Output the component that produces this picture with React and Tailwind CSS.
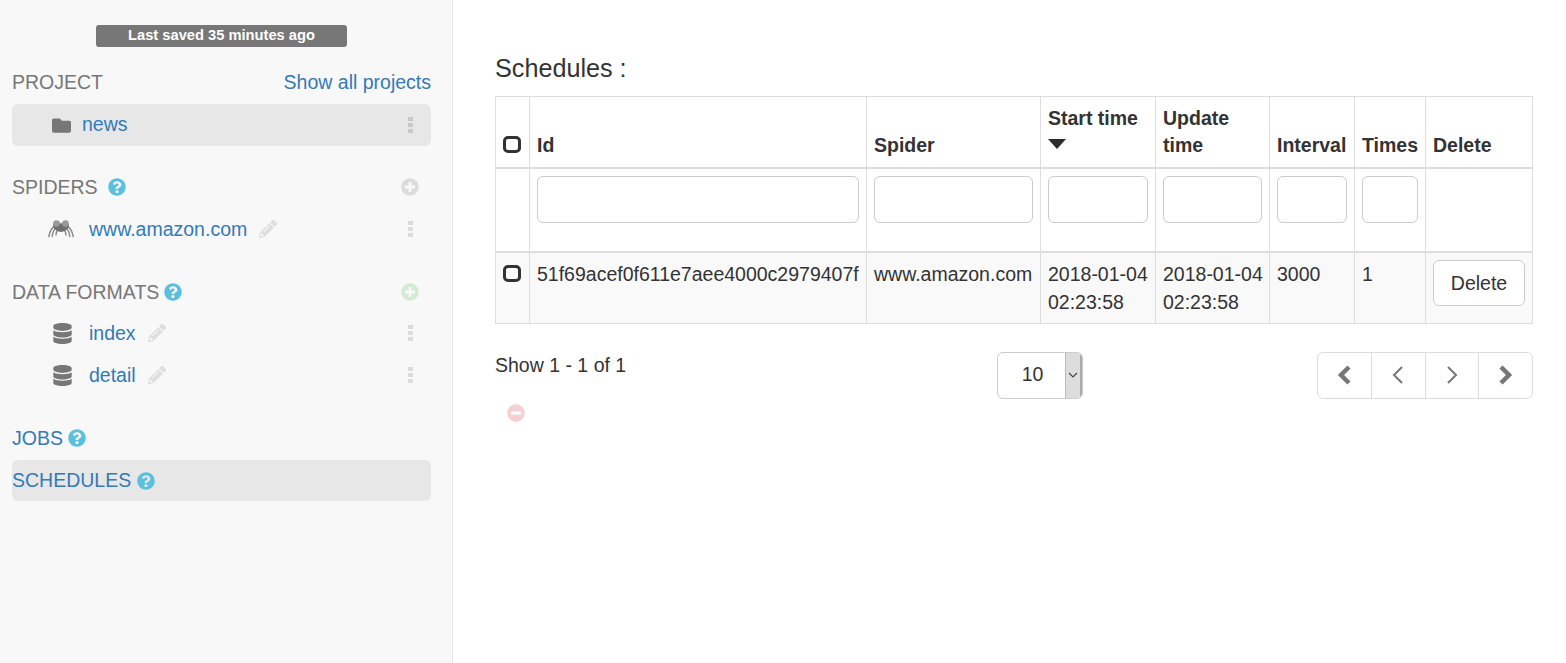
import React from "react";
import { FaFolder, FaDatabase, FaPencilAlt, FaQuestionCircle, FaPlusCircle, FaMinusCircle } from "react-icons/fa";

const Help = ({ className = "" }) => <FaQuestionCircle className={`text-[18px] text-[#5bc0de] shrink-0 ${className}`} />;

const Kebab = ({ color = "bg-[#dcdcdc]" }) => (
  <span className="ml-auto mr-[18px] flex flex-col gap-[2px]">
    <span className={`w-[5px] h-[4px] ${color}`} />
    <span className={`w-[5px] h-[4px] ${color}`} />
    <span className={`w-[5px] h-[4px] ${color}`} />
  </span>
);

const Spider = () => (
  <svg width="26" height="18" viewBox="0 0 26 18" fill="none" className="shrink-0">
    <g stroke="#8c8c8c" strokeWidth="1.5" strokeLinecap="round" strokeLinejoin="round">
      <path d="M7 6 Q2.5 8 0.8 16.5" />
      <path d="M8 8 Q5 10 4.2 16.5" />
      <path d="M10 10 Q8.2 11.5 8 15" />
      <path d="M19 6 Q23.5 8 25.2 16.5" />
      <path d="M18 8 Q21 10 21.8 16.5" />
      <path d="M16 10 Q17.8 11.5 18 15" />
    </g>
    <path d="M5 4 L12 2.5 L13 4 L14 2.5 L21 4 L20.5 8 L17 11 L13 12 L9 11 L5.5 8 Z" fill="#6f6f6f" />
    <circle cx="8.5" cy="3.6" r="3.3" fill="#999" />
    <circle cx="17.5" cy="3.6" r="3.3" fill="#999" />
  </svg>
);

const Pencil = () => <FaPencilAlt className="text-[18px] text-[#dedede] ml-[12px]" />;

const Checkbox = ({ className = "" }) => <span className={`block w-[18px] h-[17px] rounded-[5px] border-[3px] border-[#333] bg-white ${className}`} />;

const Input = () => <input className="block w-full h-[47px] rounded-[6px] border border-[#ccc] bg-white mb-[20px]" />;

const Th = ({ children, className = "" }) => (
  <th className={`border border-[#ddd] border-b-2 px-[7px] pt-[6px] pb-[8px] align-bottom text-left font-bold leading-[27px] ${className}`}>{children}</th>
);
const Td = ({ children, className = "" }) => (
  <td className={`border border-[#ddd] px-[7px] pt-[7px] pb-[7px] align-top font-normal leading-[28px] whitespace-nowrap ${className}`}>{children}</td>
);
const Fd = ({ children }) => (
  <td className="border border-[#ddd] border-b-2 px-[7px] pt-[7px] pb-2 align-top leading-[28px]">{children}</td>
);

const PageBtn = ({ children, last }) => (
  <span className={`flex-1 flex items-center justify-center ${last ? "" : "border-r border-[#ddd]"}`}>{children}</span>
);

const Chev = ({ d, w }) => (
  <svg width="16" height="20" viewBox="0 0 16 20" fill="none"><path d={d} stroke="#777" strokeWidth={w} /></svg>
);

export default function App() {
  return (
    <div className="flex min-h-screen bg-white text-[19.5px] text-[#333] font-['Liberation_Sans',Arial,sans-serif]">
      <aside className="w-[453px] shrink-0 min-h-[663px] bg-[#f8f8f8] border-r border-[#e7e7e7] pl-[12px] pr-[21px] pt-[25px]">
        <div className="flex justify-center">
          <span className="w-[251px] h-[22px] rounded-[3px] bg-[#777] text-white text-[14.7px] font-bold leading-[20px] text-center">Last saved 35 minutes ago</span>
        </div>

        <div className="mt-[21px] h-[28px] flex items-center justify-between leading-[28px]">
          <span className="text-[#777]">PROJECT</span>
          <a className="text-[#337ab7]">Show all projects</a>
        </div>
        <div className="mt-[8px] h-[42px] rounded-[6px] bg-[#e7e7e7] flex items-center pl-[40px]">
          <FaFolder className="text-[19px] text-[#777] shrink-0" />
          <a className="ml-[11px] text-[#337ab7]">news</a>
          <Kebab color="bg-[#c8c8c8]" />
        </div>

        <div className="mt-[27px] h-[28px] flex items-center">
          <span className="mt-[2px] text-[#777]">SPIDERS</span>
          <Help className="ml-[10px]" />
          <FaPlusCircle className="ml-auto mr-[12px] text-[18px] text-[#dcdcdc]" />
        </div>
        <div className="mt-[7px] h-[42px] flex items-center pl-[36px]">
          <Spider />
          <a className="mt-[2px] ml-[15px] text-[#337ab7]">www.amazon.com</a>
          <Pencil />
          <Kebab />
        </div>

        <div className="mt-[28px] h-[28px] flex items-center">
          <span className="mt-[2px] text-[#777]">DATA FORMATS</span>
          <Help className="ml-[5px]" />
          <FaPlusCircle className="ml-auto mr-[12px] text-[18px] text-[#d3ead3]" />
        </div>
        <div className="mt-[6px] h-[42px] flex items-center pl-[40px]">
          <FaDatabase className="text-[21px] text-[#777] shrink-0" />
          <a className="mt-[2px] ml-[16px] text-[#337ab7]">index</a>
          <Pencil />
          <Kebab />
        </div>
        <div className="h-[42px] flex items-center pl-[40px]">
          <FaDatabase className="text-[21px] text-[#777] shrink-0" />
          <a className="mt-[2px] ml-[16px] text-[#337ab7]">detail</a>
          <Pencil />
          <Kebab />
        </div>

        <div className="mt-[28px] h-[28px] flex items-center">
          <a className="mt-[2px] text-[#337ab7]">JOBS</a>
          <Help className="ml-[5px]" />
        </div>
        <div className="mt-[8px] h-[41px] rounded-[6px] bg-[#e7e7e7] flex items-center">
          <a className="text-[#337ab7]">SCHEDULES</a>
          <Help className="ml-[6px]" />
        </div>
      </aside>

      <main className="w-[1038px] ml-[42px] pt-[54px]">
        <h2 className="text-[25.2px] leading-[28px] font-normal h-[28px]">Schedules :</h2>
        <table className="mt-[14px] w-[1037px] table-fixed border-collapse bg-white">
          <colgroup>
            <col className="w-[34px]" />
            <col className="w-[337px]" />
            <col className="w-[174px]" />
            <col className="w-[115px]" />
            <col className="w-[114px]" />
            <col className="w-[85px]" />
            <col className="w-[71px]" />
            <col className="w-[107px]" />
          </colgroup>
          <thead>
            <tr className="h-[71px]">
              <Th><Checkbox className="mb-[6px]" /></Th>
              <Th>Id</Th>
              <Th>Spider</Th>
              <Th>
                Start time
                <svg width="18" height="10" viewBox="0 0 18 10" className="block mt-[7px] mb-[10px]"><path d="M0 0 H18 L9 10 Z" fill="#2b2b2b" /></svg>
              </Th>
              <Th>Update time</Th>
              <Th>Interval</Th>
              <Th>Times</Th>
              <Th>Delete</Th>
            </tr>
            <tr>
              <Fd />
              <Fd><Input /></Fd>
              <Fd><Input /></Fd>
              <Fd><Input /></Fd>
              <Fd><Input /></Fd>
              <Fd><Input /></Fd>
              <Fd><Input /></Fd>
              <Fd />
            </tr>
          </thead>
          <tbody>
            <tr className="bg-[#f9f9f9]">
              <Td><Checkbox className="mt-[5px]" /></Td>
              <Td>51f69acef0f611e7aee4000c2979407f</Td>
              <Td>www.amazon.com</Td>
              <Td>2018-01-04<br />02:23:58</Td>
              <Td>2018-01-04<br />02:23:58</Td>
              <Td>3000</Td>
              <Td>1</Td>
              <Td>
                <button className="block w-[92px] h-[46px] rounded-[6px] border border-[#ccc] bg-white text-[#333]">Delete</button>
              </Td>
            </tr>
          </tbody>
        </table>

        <div className="mt-[28px] flex items-start">
          <span className="w-[502px] leading-[28px] -mt-[1px]">Show 1 - 1 of 1</span>
          <span className="w-[86px] h-[47px] rounded-[6px] border border-[#ccc] bg-white flex items-center overflow-hidden">
            <span className="flex-1 text-center pl-[2px]">10</span>
            <span className="w-[17px] h-full bg-[#ddd] border-l border-[#bbb] border-r-2 border-r-[#aaa] flex items-center justify-center">
              <svg width="10" height="7" viewBox="0 0 10 7" fill="none"><path d="M1 1 L5 5 L9 1" stroke="#444" strokeWidth="1.1" /></svg>
            </span>
          </span>
          <span className="ml-auto w-[216px] h-[47px] rounded-[6px] border border-[#ddd] flex">
            <PageBtn><Chev d="M13 2 L5 10 L13 18" w="4.5" /></PageBtn>
            <PageBtn><Chev d="M12 2 L4 10 L12 18" w="2" /></PageBtn>
            <PageBtn><Chev d="M4 2 L12 10 L4 18" w="2" /></PageBtn>
            <PageBtn last><Chev d="M3 2 L11 10 L3 18" w="4.5" /></PageBtn>
          </span>
        </div>
        <FaMinusCircle className="mt-[5px] ml-[12px] text-[18px] text-[#f6cfd2]" />
      </main>
    </div>
  );
}
